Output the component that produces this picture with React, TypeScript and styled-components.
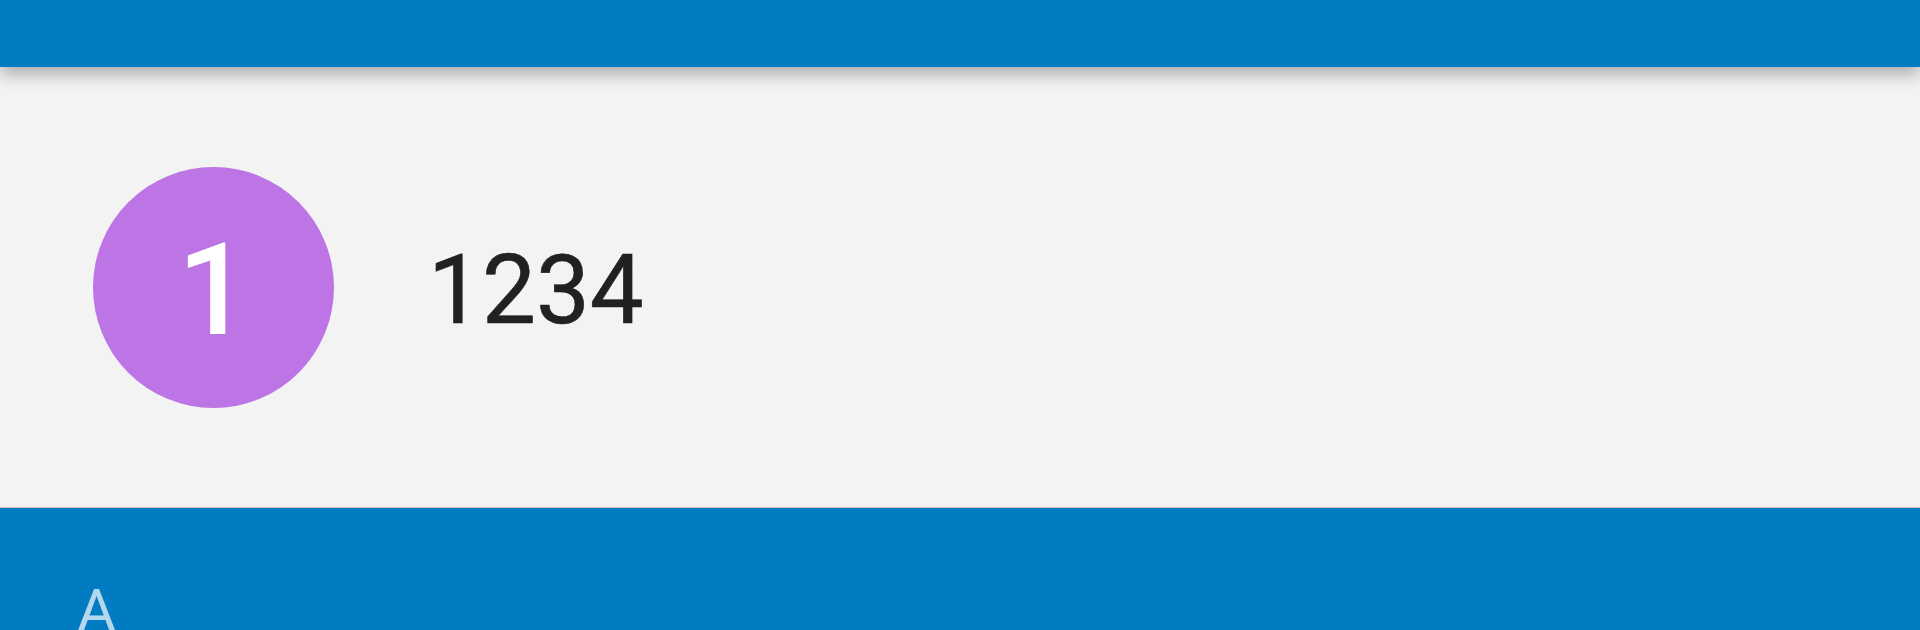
import React from "react";
import styled, { createGlobalStyle } from "styled-components";

const GlobalStyle = createGlobalStyle`
  html, body {
    margin: 0;
    padding: 0;
    background: #f3f3f3;
    font-family: Roboto, "Noto Sans", sans-serif;
  }
`;

const Page = styled.div`
  width: 1920px;
  height: 630px;
  overflow: hidden;
  display: flex;
  flex-direction: column;
  background: #f3f3f3;
`;

const TopBar = styled.header`
  height: 67px;
  flex-shrink: 0;
  background: #017bc1;
  box-shadow: 0 7px 16px rgba(0, 0, 0, 0.3);
  position: relative;
  z-index: 1;
`;

const ContactRow = styled.div`
  height: 440px;
  flex-shrink: 0;
  display: flex;
  align-items: center;
  padding-left: 93px;
  gap: 94px;
  background: #f3f3f3;
`;

const Avatar = styled.div<{ $color: string }>`
  width: 241px;
  height: 241px;
  border-radius: 50%;
  background: ${(p) => p.$color};
  color: #ffffff;
  display: flex;
  align-items: center;
  justify-content: center;
  font-size: 128px;
  font-weight: 500;
  line-height: 1;
  padding-top: 5px;
  box-sizing: border-box;
`;

const Name = styled.span`
  font-size: 96px;
  color: #212121;
  line-height: 1;
  padding-top: 6px;
  -webkit-text-stroke: 0.6px #212121;
`;

const Section = styled.section`
  flex: 1;
  background: #017bc1;
  border-top: 1px solid #cbbcbc;
  padding: 73px 0 0 77px;
`;

const SectionLetter = styled.div`
  font-size: 60px;
  line-height: 1;
  color: rgba(255, 255, 255, 0.7);
`;

const App = () => {
  return (
    <Page>
      <GlobalStyle />
      <TopBar />
      <ContactRow>
        <Avatar $color="#bd75e6">1</Avatar>
        <Name>1234</Name>
      </ContactRow>
      <Section>
        <SectionLetter>A</SectionLetter>
      </Section>
    </Page>
  );
};

export default App;
